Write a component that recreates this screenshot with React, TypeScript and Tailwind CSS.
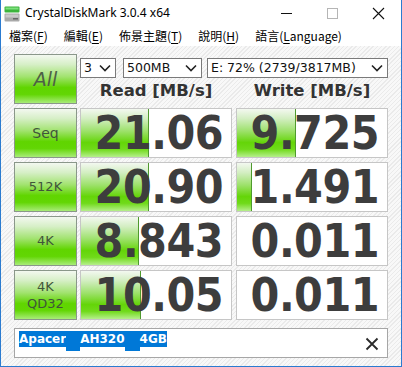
import React from "react";

const hatch =
  "bg-[repeating-linear-gradient(135deg,#f8f8f8_0px,#f8f8f8_2px,#eaeaea_2px,#eaeaea_3px)]";

const btnGrad =
  "bg-[linear-gradient(to_bottom,#f3f8f0_0%,#d6efc6_20%,#a2e370_45%,#60d500_68%,#62d604_82%,#a8ec78_100%)]";

const fillGrad =
  "bg-[linear-gradient(to_bottom,#f3f8f0_0%,#d3eec2_20%,#9de16b_46%,#64d508_70%,#70da1a_84%,#b6ef8c_100%)]";

function Chevron() {
  return (
    <svg width="12" height="8" viewBox="0 0 12 8" className="shrink-0">
      <path d="M1 1.5 L6 6.5 L11 1.5" fill="none" stroke="#222" strokeWidth="1.6" />
    </svg>
  );
}

function Combo({ w, ml, text }: { w: string; ml: string; text: string }) {
  return (
    <div
      className={`${w} ${ml} h-[20px] bg-white border border-[#7a7a7a] flex items-center justify-between pl-[3px] pr-[4px] text-[12.5px] text-[#111] font-['DejaVu_Sans',sans-serif]`}
    >
      <span className="leading-none">{text}</span>
      <Chevron />
    </div>
  );
}

function TestBtn({ children }: { children: React.ReactNode }) {
  return (
    <div
      className={`w-[63px] h-[50px] shrink-0 border border-[#8a978a] ${btnGrad} flex flex-col items-center justify-center text-[#40553a]`}
    >
      {children}
    </div>
  );
}

function Value({ v, fill, ml }: { v: string; fill: number; ml: string }) {
  return (
    <div className={`relative w-[152px] h-[50px] ${ml} bg-white border border-[#c6c6c6]`}>
      {fill > 0 && (
        <div
          className={`absolute left-0 top-0 bottom-0 ${fillGrad} border-r border-[#4f9a2e]`}
          style={{ width: fill }}
        />
      )}
      <div className="relative h-full flex items-center justify-end pr-[8px]">
        <span className="font-['DejaVu_Sans_Condensed','DejaVu_Sans',sans-serif] [font-stretch:condensed] font-bold text-[46px] leading-[48px] text-[#3d3d3d] tracking-[-0.5px] whitespace-nowrap">
          {v}
        </span>
      </div>
    </div>
  );
}

export default function App() {
  const rows = [
    { label: <span className="text-[14px] font-['DejaVu_Sans',sans-serif]">Seq</span>, r: "21.06", rf: 68, w: "9.725", wf: 59 },
    { label: <span className="text-[13px] font-['DejaVu_Sans',sans-serif]">512K</span>, r: "20.90", rf: 68, w: "1.491", wf: 15 },
    { label: <span className="text-[13px] font-['DejaVu_Sans',sans-serif]">4K</span>, r: "8.843", rf: 58, w: "0.011", wf: 0 },
    {
      label: (
        <span className="text-[13px] leading-[17px] font-['DejaVu_Sans',sans-serif] text-center">
          4K
          <br />
          QD32
        </span>
      ),
      r: "10.05",
      rf: 60,
      w: "0.011",
      wf: 0,
    },
  ];

  const menu = [
    ["檔案(", "F", ")"],
    ["編輯(", "E", ")"],
    ["佈景主題(", "T", ")"],
    ["說明(", "H", ")"],
    ["語言(", "L", "anguage)"],
  ];

  return (
    <div className="w-[402px] h-[367px] bg-white border-l border-r border-b border-[#2b7bd0] flex flex-col overflow-hidden">
      {/* title bar */}
      <div className="h-[26px] shrink-0 flex items-center">
        <svg width="16" height="16" viewBox="0 0 16 16" className="ml-[3px] mt-[1px]">
          <rect x="0.5" y="0.5" width="15" height="6" rx="1" fill="#3cb43c" />
          <rect x="1.5" y="1.5" width="13" height="2" fill="#7de07d" />
          <rect x="0.5" y="7.5" width="15" height="8" rx="1" fill="#a9a9a9" />
          <rect x="1.5" y="8.5" width="13" height="3" fill="#c9c9c9" />
          <rect x="9" y="12" width="5" height="1.5" fill="#666" />
        </svg>
        <span className="ml-[5px] text-[12px] text-black font-['Noto_Sans',sans-serif] leading-none">
          CrystalDiskMark 3.0.4 x64
        </span>
        <div className="ml-auto flex items-center h-full">
          <svg width="46" height="26" viewBox="0 0 46 26">
            <path d="M18 13.5 H29" stroke="#111" strokeWidth="1" />
          </svg>
          <svg width="46" height="26" viewBox="0 0 46 26">
            <rect x="18.5" y="8.5" width="10" height="10" fill="none" stroke="#b5b5b5" strokeWidth="1" />
          </svg>
          <svg width="46" height="26" viewBox="0 0 46 26">
            <path d="M18 8 L29 19 M29 8 L18 19" stroke="#111" strokeWidth="1.1" />
          </svg>
        </div>
      </div>
      {/* menu bar */}
      <div className="h-[20px] shrink-0 flex items-center text-[12px] text-black font-['Noto_Sans_CJK_TC',sans-serif] leading-none">
        {menu.map((m, i) => (
          <span key={i} className="px-[8px]">
            {m[0]}
            <span className="underline underline-offset-2">{m[1]}</span>
            {m[2]}
          </span>
        ))}
      </div>
      {/* client */}
      <div className={`flex-1 ${hatch} pl-[13px] pt-[8px] flex flex-col`}>
        <div className="flex flex-col gap-[4px]">
          <div className="flex h-[50px]">
            <TestBtn>
              <span className="italic text-[19px] font-['DejaVu_Sans',sans-serif] text-[#4d6046]">All</span>
            </TestBtn>
            <div className="ml-[3px] w-[308px] flex flex-col">
              <div className="flex mt-[4px]">
                <Combo w="w-[36px]" ml="" text="3" />
                <Combo w="w-[79px]" ml="ml-[7px]" text="500MB" />
                <Combo w="w-[181px]" ml="ml-[5px]" text="E: 72% (2739/3817MB)" />
              </div>
              <div className="flex flex-1 items-center font-['DejaVu_Sans',sans-serif] font-bold text-[16.5px] text-[#333] leading-none">
                <div className="w-[152px] text-center">Read [MB/s]</div>
                <div className="w-[152px] ml-[4px] text-center">Write [MB/s]</div>
              </div>
            </div>
          </div>
          {rows.map((r, i) => (
            <div key={i} className="flex h-[50px]">
              <TestBtn>{r.label}</TestBtn>
              <Value v={r.r} fill={r.rf} ml="ml-[3px]" />
              <Value v={r.w} fill={r.wf} ml="ml-[4px]" />
            </div>
          ))}
        </div>
        <div className="mt-[8px] w-[374px] h-[30px] bg-white border border-[#a6a6a6] flex items-start pl-[4px] pt-[2px] pr-[8px]">
          <div className="flex items-start text-white font-['DejaVu_Sans',sans-serif] font-bold text-[12px]">
            <span className="bg-[#0078d7] h-[16px] leading-[16px]">Apacer</span>
            <span className="bg-[#0078d7] h-[20px] w-[14px]" />
            <span className="bg-[#0078d7] h-[16px] leading-[16px]">AH320</span>
            <span className="bg-[#0078d7] h-[20px] w-[15px]" />
            <span className="bg-[#0078d7] h-[16px] leading-[16px]">4GB</span>
          </div>
          <svg width="14" height="14" viewBox="0 0 14 14" className="ml-auto mt-[6px]">
            <path d="M1.5 1.5 L12.5 12.5 M12.5 1.5 L1.5 12.5" stroke="#2a2a2a" strokeWidth="1.8" />
          </svg>
        </div>
      </div>
    </div>
  );
}
